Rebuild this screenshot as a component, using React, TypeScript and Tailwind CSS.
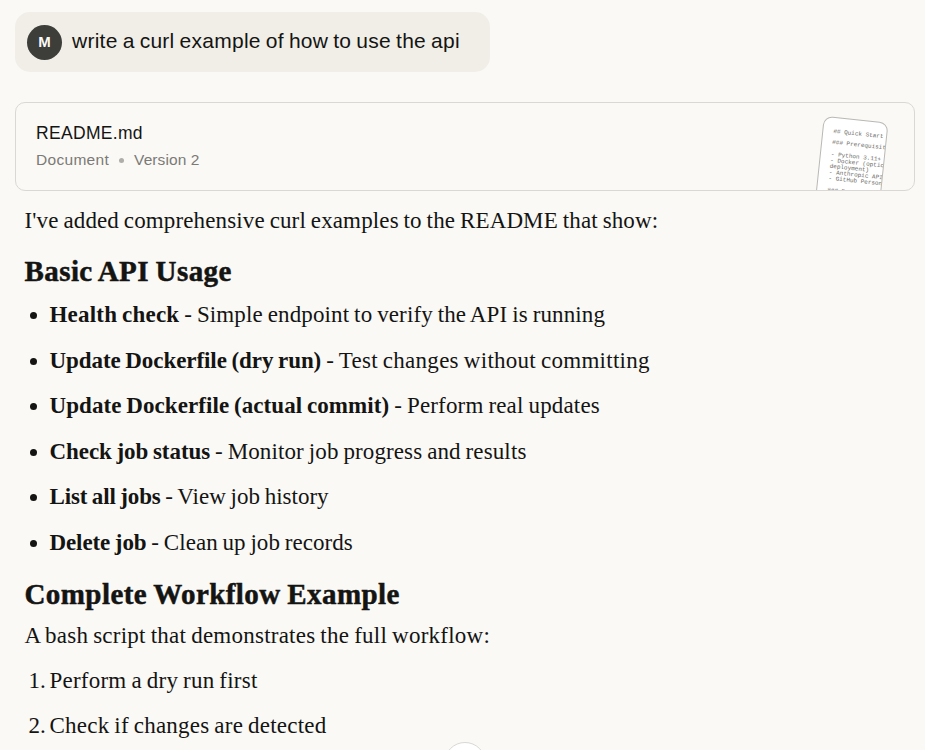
// ─── Message content ─────────────────────────────────────────────────────────

interface UsageItem {
  title: string;
  text: string;
  titleClass: string;
  textClass: string;
}

const USAGE: UsageItem[] = [
  { title: "Health check", text: "Simple endpoint to verify the API is running", titleClass: "tracking-[0.2px]", textClass: "tracking-[0.13px]" },
  { title: "Update Dockerfile (dry run)", text: "Test changes without committing", titleClass: "tracking-[-0.07px]", textClass: "tracking-[0.27px]" },
  { title: "Update Dockerfile (actual commit)", text: "Perform real updates", titleClass: "tracking-[0.07px]", textClass: "tracking-[0.17px]" },
  { title: "Check job status", text: "Monitor job progress and results", titleClass: "tracking-[-0.06px]", textClass: "tracking-[0.12px]" },
  { title: "List all jobs", text: "View job history", titleClass: "tracking-[-0.15px]", textClass: "" },
  { title: "Delete job", text: "Clean up job records", titleClass: "tracking-[-0.1px]", textClass: "tracking-[0.05px]" },
];

const STEPS = ["Perform a dry run first", "Check if changes are detected"];

const PREVIEW = `## Quick Start

### Prerequisit

- Python 3.11+
- Docker (optic
deployment)
- Anthropic API
- GitHub Person

### Environ`;

// ─── User prompt ─────────────────────────────────────────────────────────────

function UserMessage() {
  return (
    <div className="flex h-[60px] w-[475px] items-center gap-2.5 rounded-[15px] bg-[#f0eee7] px-3">
      <div className="flex size-[35px] items-center justify-center rounded-full bg-[#3d3d3a] text-[15px] font-bold text-[#faf9f5]">
        M
      </div>
      <p className="mb-[2px] whitespace-nowrap text-[21px] leading-[30px] tracking-[0.25px] [word-spacing:-1px]">
        write a curl example of how to use the api
      </p>
    </div>
  );
}

// ─── Document card ───────────────────────────────────────────────────────────

function DocumentCard() {
  return (
    <div className="relative mt-[30px] flex h-[89px] overflow-hidden rounded-[10px] border border-[#d9d8d4] px-5">
      <div className="pt-[18px]">
        <p className="text-[17.5px] leading-6 tracking-[0.32px]">README.md</p>
        <div className="mt-[3px] flex items-center text-[15.5px] leading-6 text-[#7b7a76]">
          <span className="tracking-[0.3px]">Document</span>
          <span className="ml-[10px] mr-[10px] size-[5px] rounded-full bg-[#b0aea8]" />
          <span className="tracking-[0.1px]">Version 2</span>
        </div>
      </div>

      {/* Tilted preview page, cut off by the card's bottom edge */}
      <div className="absolute left-[802.5px] top-[15.5px] h-[90px] w-[65px] rotate-[6deg] overflow-hidden rounded-[9px] border border-[#b9b8b3] bg-white pl-[10px] pt-[10.5px]">
        <pre className="font-['Liberation_Mono',monospace] text-[6px] leading-[5.9px] text-[#6b6a66]">
          {PREVIEW}
        </pre>
      </div>
    </div>
  );
}

// ─── Assistant reply ─────────────────────────────────────────────────────────

function Heading({ children, className }: { children: string; className: string }) {
  return (
    <h2 className={`text-[29px] font-bold leading-[36px] tracking-[0.42px] [-webkit-text-stroke:0.5px_#141413] ${className}`}>
      {children}
    </h2>
  );
}

function Reply() {
  return (
    <div className="whitespace-nowrap pl-[9.5px] pt-[13px] font-['Liberation_Serif',serif] text-[23px] leading-[34px] [word-spacing:-1px]">
      <p className="tracking-[0.13px]">I've added comprehensive curl examples to the README that show:</p>

      <Heading className="mt-[15px]">Basic API Usage</Heading>
      <ul className="mt-[9px] flex flex-col gap-[11.5px]">
        {USAGE.map((item) => (
          <li key={item.title} className="flex items-center">
            <span className="ml-[5px] mr-[13px] mt-[1px] size-[7px] rounded-full bg-[#141413]" />
            <b className={item.titleClass}>{item.title}</b>
            <span className={item.textClass}>&nbsp;- {item.text}</span>
          </li>
        ))}
      </ul>

      <Heading className="mt-[16px]">Complete Workflow Example</Heading>
      <p className="mt-[7px] tracking-[0.24px]">A bash script that demonstrates the full workflow:</p>
      <ol className="mt-[11px] flex flex-col gap-[11px]">
        {STEPS.map((step, i) => (
          <li key={step} className="flex">
            <span className="w-[25px] pl-[4px]">{i + 1}.</span>
            <span className="tracking-[0.22px]">{step}</span>
          </li>
        ))}
      </ol>
    </div>
  );
}

export default function App() {
  return (
    <main className="relative h-[750px] w-[925px] overflow-hidden bg-[#faf9f5] pl-[15px] pr-[10px] pt-3 font-['Liberation_Sans',sans-serif] text-[#141413]">
      <UserMessage />
      <DocumentCard />
      <Reply />
      {/* Scroll-to-bottom button, mostly below the fold */}
      <button className="absolute left-[444px] top-[742px] size-[42px] rounded-full border border-[#d9d8d4] bg-white" aria-label="Scroll to bottom" />
    </main>
  );
}
